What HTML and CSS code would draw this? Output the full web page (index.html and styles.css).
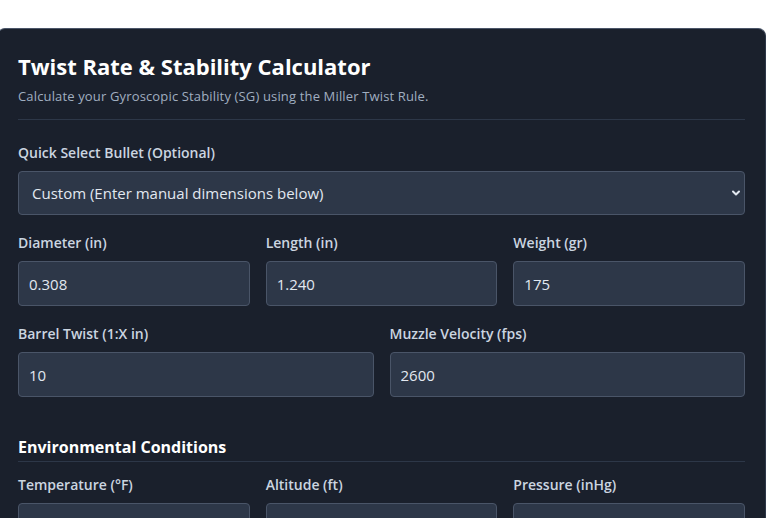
FILE: index.html
```html
<!DOCTYPE html>
<html lang="en">
<head>
    <meta charset="UTF-8">
    <meta name="viewport" content="width=device-width, initial-scale=1.0">
    <title>Twist Rate &amp; Stability Calculator</title>
    <link rel="stylesheet" href="styles.css">
</head>
<body>
    <div class="card">
        <div class="header">
            <h1>Twist Rate &amp; Stability Calculator</h1>
            <p>Calculate your Gyroscopic Stability (SG) using the Miller Twist Rule.</p>
        </div>

        <div class="field">
            <label for="bullet">Quick Select Bullet (Optional)</label>
            <div class="select-wrap">
                <select id="bullet">
                    <option>Custom (Enter manual dimensions below)</option>
                </select>
                <svg class="chevron" width="10" height="10" viewBox="0 0 10 10">
                    <path d="M2 3.5 L5 6.5 L8 3.5" fill="none" stroke="#e2e8f0" stroke-width="2" stroke-linecap="round" stroke-linejoin="round"/>
                </svg>
            </div>
        </div>

        <div class="row three">
            <div class="field">
                <label>Diameter (in)</label>
                <input type="text" value="0.308">
            </div>
            <div class="field">
                <label>Length (in)</label>
                <input type="text" value="1.240">
            </div>
            <div class="field">
                <label>Weight (gr)</label>
                <input type="text" value="175">
            </div>
        </div>

        <div class="row two">
            <div class="field">
                <label>Barrel Twist (1:X in)</label>
                <input type="text" value="10">
            </div>
            <div class="field">
                <label>Muzzle Velocity (fps)</label>
                <input type="text" value="2600">
            </div>
        </div>

        <h2>Environmental Conditions</h2>

        <div class="row three">
            <div class="field">
                <label>Temperature (°F)</label>
                <input type="text" value="">
            </div>
            <div class="field">
                <label>Altitude (ft)</label>
                <input type="text" value="">
            </div>
            <div class="field">
                <label>Pressure (inHg)</label>
                <input type="text" value="">
            </div>
        </div>
    </div>
</body>
</html>
```

FILE: styles.css
```css
* { box-sizing: border-box; }
body {
    margin: 0;
    padding-top: 28px;
    background: #ffffff;
    font-family: "Open Sans", "Noto Sans", sans-serif;
    overflow: hidden;
}
.card {
    width: 769px;
    margin-left: -3px;
    background: #1a202c;
    border: 1px solid #2d3748;
    border-top-color: #4a5568;
    border-radius: 8px;
    padding: 24px 20px 40px;
}
.header {
    border-bottom: 1px solid #2d3748;
    padding-bottom: 14px;
    margin-bottom: 23px;
}
h1 {
    margin: 0 0 8px;
    font-size: 22px;
    font-weight: 700;
    color: #ffffff;
    line-height: 1.2;
}
.header p {
    margin: 0;
    font-size: 13px;
    letter-spacing: 0.15px;
    color: #a0aec0;
}
.field {
    display: flex;
    flex-direction: column;
    margin-bottom: 18px;
}
.row .field { margin-bottom: 0; }
.row {
    display: grid;
    gap: 16px;
    margin-bottom: 18px;
}
.row.three { grid-template-columns: repeat(3, 1fr); }
.row.two { grid-template-columns: repeat(2, 1fr); }
label {
    font-size: 14px;
    font-weight: 600;
    color: #cbd5e0;
    line-height: 20px;
    margin-bottom: 8px;
}
input, select {
    height: 45px;
    background: #2d3748;
    border: 1px solid #4a5568;
    border-radius: 4px;
    color: #e2e8f0;
    font-family: inherit;
    font-size: 15px;
    padding: 0 10px;
    width: 100%;
}
.select-wrap { position: relative; }
select {
    -webkit-appearance: none;
    appearance: none;
    height: 44px;
    padding: 0 13px;
}
.chevron {
    position: absolute;
    right: 4px;
    top: 17px;
}
h2 {
    margin: 39px 0 13px;
    font-size: 16px;
    font-weight: 700;
    color: #ffffff;
    padding-bottom: 3px;
    border-bottom: 1px solid #2d3748;
}
```
